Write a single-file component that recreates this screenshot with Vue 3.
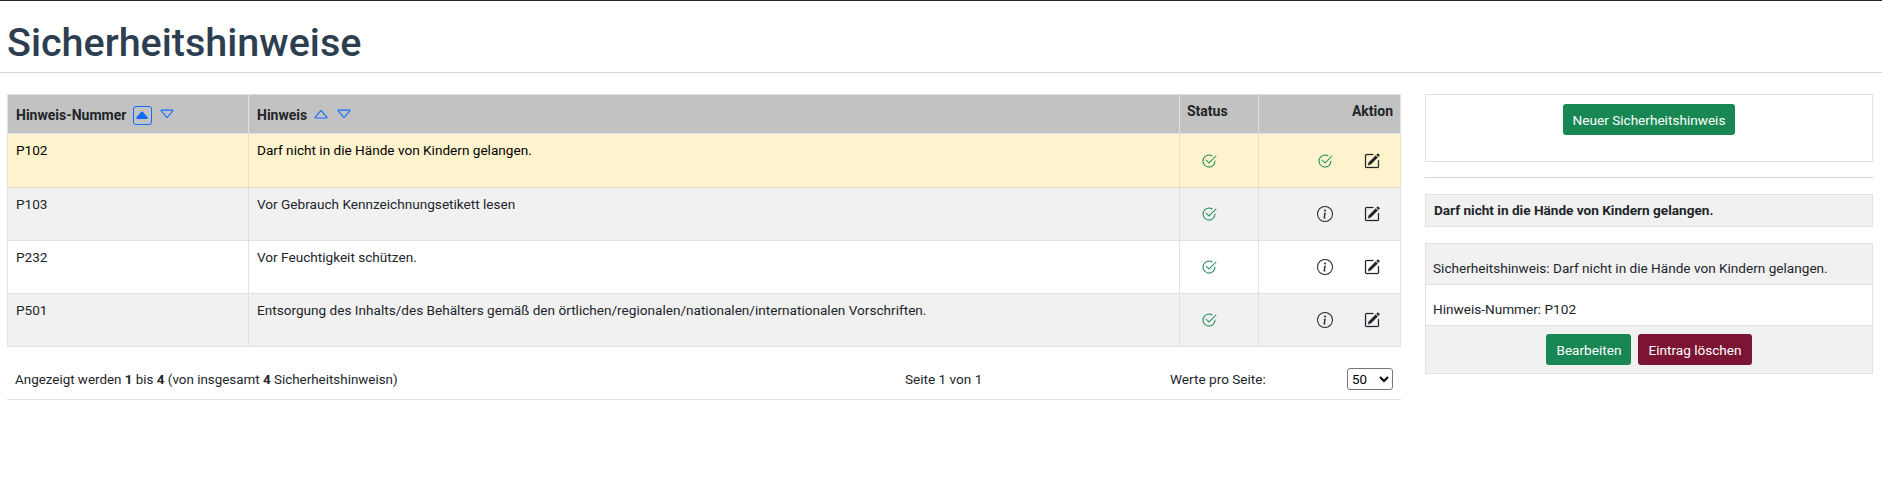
<script setup>
const ICON = {
  check: ['M2.5 8a5.5 5.5 0 0 1 8.25-4.764.5.5 0 0 0 .5-.866A6.5 6.5 0 1 0 14.5 8a.5.5 0 0 0-1 0 5.5 5.5 0 1 1-11 0z', 'M15.354 3.354a.5.5 0 0 0-.708-.708L8 9.293 5.354 6.646a.5.5 0 1 0-.708.708l3 3a.5.5 0 0 0 .708 0l7-7z'],
  info: ['M8 15A7 7 0 1 1 8 1a7 7 0 0 1 0 14zm0 1A8 8 0 1 0 8 0a8 8 0 0 0 0 16z', 'm8.93 6.588-2.29.287-.082.38.45.083c.294.07.352.176.288.469l-.738 3.468c-.194.897.105 1.319.808 1.319.545 0 1.178-.252 1.465-.598l.088-.416c-.2.176-.492.246-.686.246-.275 0-.375-.193-.304-.533L8.93 6.588zM9 4.5a1 1 0 1 1-2 0 1 1 0 0 1 2 0z'],
  edit: ['M15.502 1.94a.5.5 0 0 1 0 .706L14.459 3.69l-2-2L13.502.646a.5.5 0 0 1 .707 0l1.293 1.293zm-1.75 2.456-2-2L4.939 9.21a.5.5 0 0 0-.121.196l-.805 2.414a.25.25 0 0 0 .316.316l2.414-.805a.5.5 0 0 0 .196-.12l6.813-6.814z', 'M1 13.5A1.5 1.5 0 0 0 2.5 15h11a1.5 1.5 0 0 0 1.5-1.5v-6a.5.5 0 0 0-1 0v6a.5.5 0 0 1-.5.5h-11a.5.5 0 0 1-.5-.5v-11a.5.5 0 0 1 .5-.5H9a.5.5 0 0 0 0-1H2.5A1.5 1.5 0 0 0 1 2.5v11z'],
  up: ['M3.204 11h9.592L8 5.519 3.204 11zm-.753-.659 4.796-5.48a1 1 0 0 1 1.506 0l4.796 5.48c.566.647.106 1.659-.753 1.659H3.204a1 1 0 0 1-.753-1.659z'],
  down: ['M3.204 5h9.592L8 10.481 3.204 5zm-.753.659 4.796 5.48a1 1 0 0 0 1.506 0l4.796-5.48c.566-.647.106-1.659-.753-1.659H3.204a1 1 0 0 0-.753 1.659z'],
  upFill: ['m7.247 4.86-4.796 5.481c-.566.647-.106 1.659.753 1.659h9.592a1 1 0 0 0 .753-1.659l-4.796-5.48a1 1 0 0 0-1.506 0z']
}
const rows = [
  { nr: 'P102', text: 'Darf nicht in die Hände von Kindern gelangen.', selected: true },
  { nr: 'P103', text: 'Vor Gebrauch Kennzeichnungsetikett lesen' },
  { nr: 'P232', text: 'Vor Feuchtigkeit schützen.' },
  { nr: 'P501', text: 'Entsorgung des Inhalts/des Behälters gemäß den örtlichen/regionalen/nationalen/internationalen Vorschriften.' }
]
</script>

<template>
  <div class="page">
    <h1 class="title">Sicherheitshinweise</h1>
    <div class="content">
      <main class="left">
        <table class="grid">
          <colgroup>
            <col class="c1" /><col class="c2" /><col class="c3" /><col class="c4" />
          </colgroup>
          <thead>
            <tr>
              <th>
                <span class="head">Hinweis-Nummer
                  <span class="sort active"><svg viewBox="0 0 16 16" class="caret"><path :d="ICON.upFill[0]" /></svg></span>
                  <svg viewBox="0 0 16 16" class="caret down"><path :d="ICON.down[0]" /></svg>
                </span>
              </th>
              <th>
                <span class="head">Hinweis
                  <svg viewBox="0 0 16 16" class="caret up"><path :d="ICON.up[0]" /></svg>
                  <svg viewBox="0 0 16 16" class="caret down"><path :d="ICON.down[0]" /></svg>
                </span>
              </th>
              <th class="top">Status</th>
              <th class="top right">Aktion</th>
            </tr>
          </thead>
          <tbody>
            <tr v-for="(r, i) in rows" :key="r.nr" :class="{ selected: r.selected, odd: i % 2 === 1 }">
              <td>{{ r.nr }}</td>
              <td>{{ r.text }}</td>
              <td class="icons">
                <svg viewBox="0 0 16 16" class="ic green"><path v-for="d in ICON.check" :key="d" :d="d" /></svg>
              </td>
              <td class="icons">
                <div class="actions">
                  <svg v-if="r.selected" viewBox="0 0 16 16" class="ic green"><path v-for="d in ICON.check" :key="d" :d="d" /></svg>
                  <svg v-else viewBox="0 0 16 16" class="ic dark"><path v-for="d in ICON.info" :key="d" :d="d" /></svg>
                  <svg viewBox="0 0 16 16" class="ic dark heavy"><path v-for="d in ICON.edit" :key="d" :d="d" fill-rule="evenodd" /></svg>
                </div>
              </td>
            </tr>
          </tbody>
        </table>
        <div class="footer">
          <div class="f-count">Angezeigt werden <b>1</b> bis <b>4</b> (von insgesamt <b>4</b> Sicherheitshinweisn)</div>
          <div class="f-page">Seite 1 von 1</div>
          <div class="f-per">Werte pro Seite:</div>
          <select class="f-select"><option>50</option></select>
        </div>
      </main>
      <aside class="side">
        <div class="new-box"><button class="btn green-btn">Neuer Sicherheitshinweis</button></div>
        <hr class="rule" />
        <div class="sel-title">Darf nicht in die Hände von Kindern gelangen.</div>
        <div class="card">
          <div class="line grey">Sicherheitshinweis: Darf nicht in die Hände von Kindern gelangen.</div>
          <div class="line">Hinweis-Nummer: P102</div>
          <div class="btns">
            <button class="btn green-btn">Bearbeiten</button>
            <button class="btn red-btn">Eintrag löschen</button>
          </div>
        </div>
      </aside>
    </div>
  </div>
</template>

<style>
html, body { margin: 0; background: #fff; }
</style>

<style scoped>
.page {
  border-top: 1px solid #212529;
  font-family: Roboto, sans-serif;
  font-size: 13.6px;
  line-height: 21px;
  color: #212529;
}
.title {
  margin: 0;
  height: 72px;
  padding: 18px 7px 0;
  box-sizing: border-box;
  border-bottom: 1px solid #d3d5d9;
  font-size: 39.5px;
  line-height: 48px;
  font-weight: 500;
  color: #2c3e50;
}
.content { display: flex; padding: 21px 9px 0 7px; gap: 24px; }
.left { width: 1394px; flex: none; }
.side { flex: 1; min-width: 0; }
.grid { width: 100%; table-layout: fixed; border-collapse: collapse; border: 1px solid #dee2e6; }
.c1 { width: 241px; } .c2 { width: 931px; } .c3 { width: 79px; }
th {
  background: #c2c2c2;
  border: 1px solid #dee2e6;
  height: 39px;
  padding: 0 8px;
  box-sizing: border-box;
  text-align: left;
  font-weight: 700;
  font-size: 14px;
}
th.top { vertical-align: top; padding: 6px 7px 0 7px; }
th.right { text-align: right; }
.head { display: inline-flex; align-items: center; padding-top: 2px; white-space: pre; }
.sort.active {
  display: inline-flex; align-items: center; justify-content: center;
  width: 19px; height: 19px; margin-left: 3px; box-sizing: border-box;
  border: 1px solid #0d6efd; border-radius: 3px;
}
.sort.active .caret { margin: 0; width: 16px; height: 16px; }
.caret { width: 18px; height: 18px; fill: #0d6efd; flex: none; }
.head .caret.up { margin-left: 1px; margin-top: -3px; }
.head .caret.down { margin-left: 6px; margin-top: -3px; }
.head .caret.up + .caret.down { margin-left: 5px; }
td {
  border: 1px solid #dee2e6;
  height: 53px;
  padding: 6.4px 8px 5px;
  box-sizing: border-box;
  vertical-align: top;
  color: #212529;
}
tbody tr.selected td { height: 54px; }
tbody tr.odd td { background: #f1f1f2; }
tbody tr.selected td { background: #fff3cd; border-color: #eadfc0; color: #000; }
td.icons { vertical-align: middle; padding: 0 21px; }
td.icons .ic { display: block; }
.ic { width: 16px; height: 16px; }
.green { fill: #198754; }
.dark { fill: #212529; }
.heavy path { stroke: #212529; stroke-width: 0.25; }
.actions { display: flex; justify-content: flex-end; gap: 31px; margin-right: -1px; }
.footer {
  display: flex; align-items: center;
  height: 53px; padding: 12px 7px 0 8px;
  box-sizing: border-box;
  border-bottom: 1px solid #dee2e6;
}
.f-count { width: 890px; font-size: 13.4px; }
.f-page { width: 265px; }
.f-per { flex: 1; }
.f-select {
  width: 46px; height: 22px; font-family: inherit; font-size: 13.33px;
  background: #fff; border: 1px solid #767676; border-radius: 3px; color: #000;
  margin-left: -1px; margin-right: 1px;
}
.new-box {
  height: 68px; box-sizing: border-box; padding-top: 9px; text-align: center;
  border: 1px solid #dee2e6;
}
.btn {
  height: 31px; padding: 0 9px; border: 1px solid transparent; border-radius: 3px;
  font-family: inherit; font-size: 13.6px; color: #fff;
}
.green-btn { background: #198754; }
.red-btn { background: #7b1533; }
.rule { margin: 15px 0 16px; border: 0; border-top: 1px solid #d3d5d9; }
.sel-title {
  height: 33px; box-sizing: border-box; padding: 5px 8px;
  background: #f1f1f2; border: 1px solid #dee2e6; font-weight: 700;
}
.card { margin-top: 16px; border: 1px solid #dee2e6; }
.line { height: 41px; box-sizing: border-box; padding: 14px 7px 0; background: #fff; border-bottom: 1px solid #dee2e6; }
.line.grey { background: #f1f1f2; }
.btns { height: 47px; box-sizing: border-box; padding-top: 8px; background: #f1f1f2; display: flex; justify-content: center; gap: 7px; }
</style>
